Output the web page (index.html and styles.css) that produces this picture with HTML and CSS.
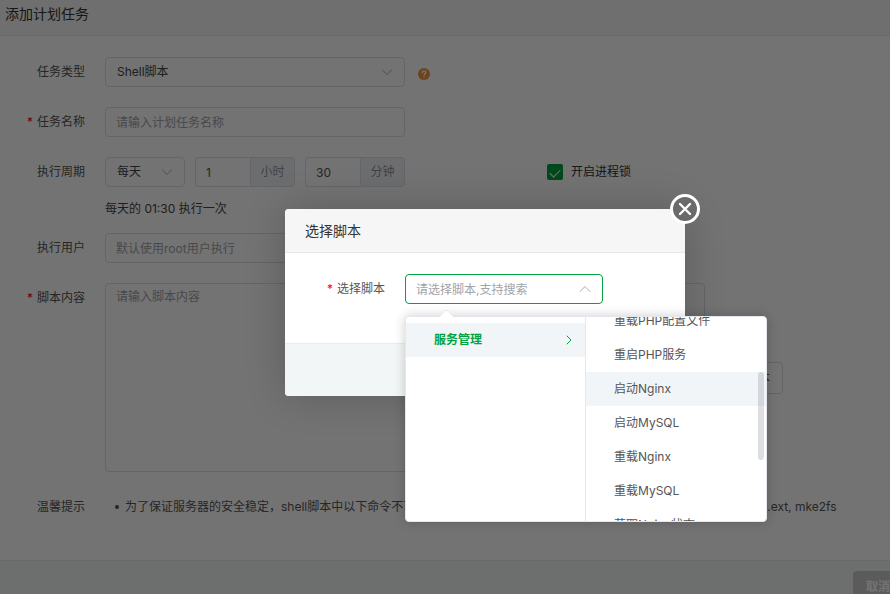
FILE: index.html
```html
<!DOCTYPE html>
<html lang="zh-CN">
<head>
  <meta charset="UTF-8" />
  <title>添加计划任务</title>
  <link rel="stylesheet" href="styles.css">
</head>
<body>
  <div class="task-dialog">
    <div class="task-header">添加计划任务</div>

    <form class="task-body">
      <div class="form-row">
        <label class="form-label" for="taskType">任务类型</label>
        <div class="select-wrap type-select">
          <select id="taskType" class="control"><option>Shell脚本</option></select>
          <svg class="arrow" viewBox="0 0 12 12"><path d="M1.5 4 L6 8.5 L10.5 4" /></svg>
        </div>
        <svg class="help-icon" viewBox="0 0 12 12">
          <circle cx="6" cy="6" r="6" />
          <path d="M4.2 4.7 C4.2 2.4 7.8 2.4 7.8 4.6 C7.8 5.9 6 5.9 6 7.2 M6 9.1 V9.3" />
        </svg>
      </div>

      <div class="form-row">
        <label class="form-label required" for="taskName">任务名称</label>
        <input type="text" id="taskName" class="control name-input" placeholder="请输入计划任务名称" />
      </div>

      <div class="form-row cycle-row">
        <label class="form-label" for="cycle">执行周期</label>
        <div class="select-wrap cycle-select">
          <select id="cycle" class="control"><option>每天</option></select>
          <svg class="arrow" viewBox="0 0 12 12"><path d="M1.5 4 L6 8.5 L10.5 4" /></svg>
        </div>
        <div class="input-group">
          <input type="text" id="hour" class="control" value="1" aria-label="小时" />
          <span class="addon">小时</span>
        </div>
        <div class="input-group">
          <input type="text" id="minute" class="control" value="30" aria-label="分钟" />
          <span class="addon">分钟</span>
        </div>
        <label class="lock-check" for="lock">
          <input type="checkbox" id="lock" checked />
          <span>开启进程锁</span>
        </label>
      </div>
      <p class="cycle-hint">每天的 01:30 执行一次</p>

      <div class="form-row">
        <label class="form-label" for="runUser">执行用户</label>
        <input type="text" id="runUser" class="control name-input" placeholder="默认使用root用户执行" />
      </div>

      <div class="form-row script-row">
        <label class="form-label required" for="script">脚本内容</label>
        <textarea id="script" class="control script-input" placeholder="请输入脚本内容"></textarea>
        <button type="button" class="pick-btn">选择脚本</button>
      </div>

      <div class="form-row tips-row">
        <span class="form-label">温馨提示</span>
        <ul class="tips">
          <li>为了保证服务器的安全稳定，shell脚本中以下命令不可使用：shutdown,init 0, mkfs, passwd, chpasswd, --stdin, mkfs.ext, mke2fs</li>
        </ul>
      </div>
    </form>

    <div class="task-footer">
      <button type="button" class="btn btn-cancel">取消</button>
      <button type="button" class="btn btn-submit">确定</button>
    </div>

    <!-- Script picker -->
    <div class="overlay">
      <div class="modal" role="dialog" aria-labelledby="modalTitle">
        <button type="button" class="close-btn" aria-label="关闭">
          <svg viewBox="0 0 30 30"><path d="M10 10 L20 20 M20 10 L10 20" /></svg>
        </button>
        <div class="modal-header" id="modalTitle">选择脚本</div>
        <div class="modal-body">
          <label class="form-label required" for="picker">选择脚本</label>
          <div class="cascader">
            <input type="text" id="picker" class="control" placeholder="请选择脚本,支持搜索" />
            <svg class="arrow" viewBox="0 0 12 12"><path d="M1 8.5 L6 3.5 L11 8.5" /></svg>

            <div class="dropdown">
              <ul class="menu">
                <li>
                  <button type="button" class="menu-item selected">
                    服务管理
                    <svg viewBox="0 0 12 12"><path d="M4 2 L8 6 L4 10" /></svg>
                  </button>
                </li>
              </ul>
              <ul class="menu" id="scriptMenu">
                <li><button type="button" class="menu-item">重载PHP配置文件</button></li>
                <li><button type="button" class="menu-item">重启PHP服务</button></li>
                <li><button type="button" class="menu-item hovered">启动Nginx</button></li>
                <li><button type="button" class="menu-item">启动MySQL</button></li>
                <li><button type="button" class="menu-item">重载Nginx</button></li>
                <li><button type="button" class="menu-item">重载MySQL</button></li>
                <li><button type="button" class="menu-item">获取Nginx状态</button></li>
              </ul>
              <span class="scroll-thumb"></span>
            </div>
          </div>
        </div>
        <div class="modal-footer"></div>
      </div>
    </div>
  </div>

  <script>
    document.getElementById('scriptMenu').scrollTop = 19;
  </script>
</body>
</html>
```

FILE: styles.css
```css
* {
  margin: 0;
  padding: 0;
  box-sizing: border-box;
}

body {
  font-family: Inter, "Noto Sans CJK SC", sans-serif;
  font-size: 12px;
  line-height: 20px;
  color: #555;
  height: 100vh;
  overflow: hidden;
}

button,
input,
select,
textarea {
  font: inherit;
  color: inherit;
}

ul {
  list-style: none;
}

svg {
  fill: none;
  stroke-linecap: round;
  stroke-linejoin: round;
}

/* Task dialog, runs past the right edge of the window */
.task-dialog {
  position: relative;
  width: calc(100% + 80px);
  background-color: #fff;
}

.task-header {
  padding: 4px 5px 11px;
  border-bottom: 1px solid #e8e8e8;
  background-color: #f6f6f6;
  color: #333;
  font-size: 14px;
}

.task-body {
  padding: 21px 20px 38px 0;
}

.task-footer {
  display: flex;
  justify-content: flex-end;
  gap: 10px;
  padding: 10px 7px;
  border-top: 1px solid #e0eae8;
  background-color: #f0f5f4;
}

/* Form */
.form-row {
  display: flex;
  align-items: center;
  margin-bottom: 20px;
}

.form-label {
  width: 85px;
  margin-right: 20px;
  line-height: 30px;
  text-align: right;
}

.required::before {
  content: "*";
  margin-right: 4px;
  color: #f00;
}

.control {
  display: block;
  width: 100%;
  height: 30px;
  padding: 0 10px;
  border: 1px solid #dcdfe6;
  border-radius: 4px;
  background-color: #fff;
  outline: none;
}

.control::placeholder {
  color: #a0a3a9;
  opacity: 1;
}

select.control {
  appearance: none;
  padding: 0 11px;
  color: #444;
}

.select-wrap {
  position: relative;
}

.arrow {
  position: absolute;
  top: 9px;
  right: 12px;
  width: 12px;
  height: 12px;
  stroke: #a8abb2;
  pointer-events: none;
}

.type-select,
.name-input {
  width: 300px;
}

.help-icon {
  width: 12px;
  height: 12px;
  margin: 4px 0 0 13px;
}

.help-icon circle {
  fill: #f0953a;
}

.help-icon path {
  stroke: #fff;
  stroke-width: 1.3;
}

.cycle-row {
  margin-bottom: 10px;
}

.cycle-select {
  width: 80px;
}

.input-group {
  display: flex;
  width: 100px;
  margin-left: 10px;
}

.input-group .control {
  flex: 1;
  min-width: 0;
  border-right: 0;
  border-radius: 4px 0 0 4px;
}

.addon {
  width: 45px;
  border: 1px solid #dcdfe6;
  border-radius: 0 4px 4px 0;
  background-color: #f0f2f7;
  color: #909399;
  line-height: 28px;
  text-align: center;
}

.lock-check {
  display: flex;
  align-items: center;
  gap: 8px;
  margin-left: 142px;
  color: #333;
}

.lock-check input {
  appearance: none;
  display: grid;
  place-items: center;
  width: 16px;
  height: 16px;
  border-radius: 2px;
  background-color: #00a33f;
}

.lock-check input::after {
  content: "";
  width: 9px;
  height: 5px;
  border: solid #fff;
  border-width: 0 0 1px 1px;
  transform: rotate(-45deg);
}

.cycle-hint {
  margin: 0 0 12px 105px;
  color: #444;
  line-height: 24px;
}

.script-row .form-label,
.tips-row .form-label {
  align-self: flex-start;
}

.script-input {
  width: 600px;
  height: 189px;
  padding: 3px 10px;
  resize: none;
}

.pick-btn {
  height: 32px;
  margin-left: 4px;
  padding: 0 12px;
  border: 1px solid #dcdfe6;
  border-radius: 4px;
  background-color: #fff;
}

.tips-row {
  margin-bottom: 0;
}

.tips {
  margin-left: 10px;
  white-space: nowrap;
}

.tips li {
  display: flex;
  align-items: center;
  gap: 6px;
}

.tips li::before {
  content: "";
  width: 4px;
  height: 4px;
  border-radius: 50%;
  background-color: #555;
}

.btn {
  height: 32px;
  padding: 0 13px;
  border: none;
  border-radius: 4px;
  color: #fff;
  font-weight: bold;
}

.btn-cancel {
  background-color: #cbcbcb;
}

.btn-submit {
  background-color: #00a33f;
}

/* Modal */
.overlay {
  position: absolute;
  inset: 0;
  display: flex;
  align-items: center;
  justify-content: center;
  padding-bottom: 8px;
  background-color: rgba(0, 0, 0, 0.55);
}

.modal {
  position: relative;
  width: 400px;
  border-radius: 4px;
  background-color: #fff;
  box-shadow: 0 0 40px rgba(0, 0, 0, 0.2);
}

.modal-header {
  padding: 12px 20px 11px;
  border-bottom: 1px solid #e8e8e8;
  border-radius: 4px 4px 0 0;
  background-color: #f6f6f6;
  color: #333;
  font-size: 14px;
}

.modal-body {
  display: flex;
  padding: 21px 0 39px 15px;
}

.modal-footer {
  height: 53px;
  border-top: 1px solid #e6edeb;
  border-radius: 0 0 4px 4px;
  background-color: #f2f6f7;
}

.close-btn {
  position: absolute;
  top: -15px;
  right: -15px;
  width: 30px;
  height: 30px;
  border: 3px solid #fff;
  border-radius: 50%;
  background-color: #6b6b6b;
  cursor: pointer;
}

.close-btn svg {
  display: block;
  width: 30px;
  height: 30px;
  margin: -3px;
  stroke: #fff;
  stroke-width: 2.4;
}

/* Cascader */
.cascader {
  position: relative;
  width: 198px;
}

.cascader .control {
  border-color: #00a33f;
}

.dropdown {
  position: absolute;
  top: 42px;
  left: 0;
  display: flex;
  width: 362px;
  height: 206px;
  border: 1px solid #e4e7ed;
  border-radius: 4px;
  background-color: #fff;
  box-shadow: 0 0 12px rgba(0, 0, 0, 0.2);
}

.dropdown::before {
  content: "";
  position: absolute;
  top: -6px;
  left: 35px;
  width: 10px;
  height: 10px;
  border: solid #e4e7ed;
  border-width: 1px 0 0 1px;
  border-radius: 2px 0 0 0;
  background-color: #fff;
  transform: rotate(45deg);
}

.menu {
  position: relative;
  width: 180px;
  padding: 6px 0;
  overflow: hidden;
}

.menu:first-child {
  border-right: 1px solid #e4e7ed;
}

.menu-item {
  display: flex;
  align-items: center;
  justify-content: space-between;
  width: 100%;
  height: 34px;
  padding: 0 10px 0 28px;
  border: none;
  background: none;
  color: #555;
  cursor: pointer;
}

.menu-item.selected {
  background-color: #f1f5f8;
  color: #00a33f;
  font-weight: bold;
}

.menu-item.hovered {
  background-color: #f1f5f8;
}

.menu-item svg {
  width: 12px;
  height: 12px;
  stroke: #00a33f;
}

.scroll-thumb {
  position: absolute;
  top: 55px;
  right: 2px;
  width: 6px;
  height: 88px;
  border-radius: 3px;
  background-color: rgba(144, 147, 153, 0.3);
}
```
